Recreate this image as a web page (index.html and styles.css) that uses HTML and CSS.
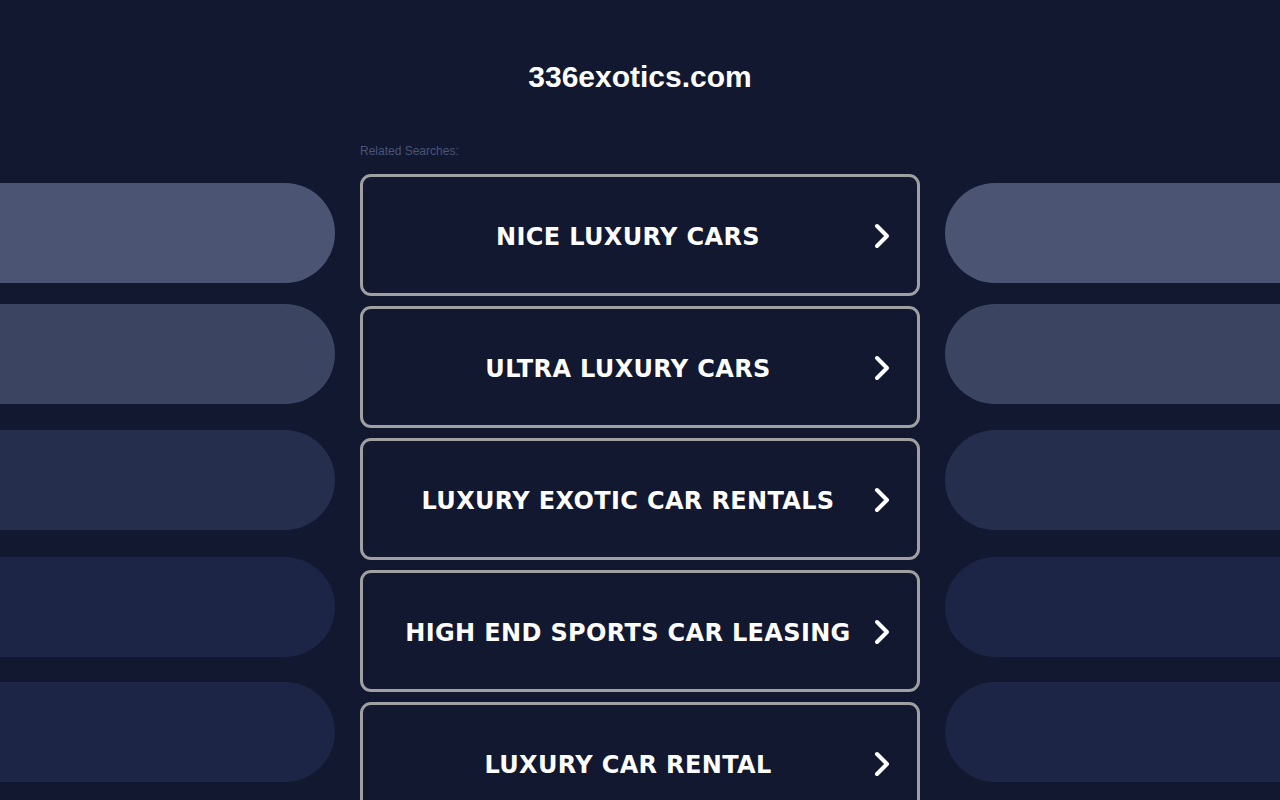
FILE: index.html
```html
<!DOCTYPE html>
<html>
<head>
<meta charset="utf-8">
<title>336exotics.com</title>
<link rel="stylesheet" href="styles.css">
</head>
<body>
<div class="page">
  <h1 class="title">336exotics.com</h1>
  <div class="grid">
    <div class="side side-left">
      <div class="pill p1"></div>
      <div class="pill p2"></div>
      <div class="pill p3"></div>
      <div class="pill p4"></div>
      <div class="pill p5"></div>
    </div>
    <div class="center">
      <div class="label">Related Searches:</div>
      <a class="btn" href="#"><span class="btn-text">NICE LUXURY CARS</span><svg class="chev" viewBox="0 0 18 28" width="18" height="28"><path d="M4 4 L14 14 L4 24" fill="none" stroke="#fff" stroke-width="4" stroke-linecap="round" stroke-linejoin="round"/></svg></a>
      <a class="btn" href="#"><span class="btn-text">ULTRA LUXURY CARS</span><svg class="chev" viewBox="0 0 18 28" width="18" height="28"><path d="M4 4 L14 14 L4 24" fill="none" stroke="#fff" stroke-width="4" stroke-linecap="round" stroke-linejoin="round"/></svg></a>
      <a class="btn" href="#"><span class="btn-text">LUXURY EXOTIC CAR RENTALS</span><svg class="chev" viewBox="0 0 18 28" width="18" height="28"><path d="M4 4 L14 14 L4 24" fill="none" stroke="#fff" stroke-width="4" stroke-linecap="round" stroke-linejoin="round"/></svg></a>
      <a class="btn" href="#"><span class="btn-text">HIGH END SPORTS CAR LEASING</span><svg class="chev" viewBox="0 0 18 28" width="18" height="28"><path d="M4 4 L14 14 L4 24" fill="none" stroke="#fff" stroke-width="4" stroke-linecap="round" stroke-linejoin="round"/></svg></a>
      <a class="btn" href="#"><span class="btn-text">LUXURY CAR RENTAL</span><svg class="chev" viewBox="0 0 18 28" width="18" height="28"><path d="M4 4 L14 14 L4 24" fill="none" stroke="#fff" stroke-width="4" stroke-linecap="round" stroke-linejoin="round"/></svg></a>
    </div>
    <div class="side side-right">
      <div class="pill p1"></div>
      <div class="pill p2"></div>
      <div class="pill p3"></div>
      <div class="pill p4"></div>
      <div class="pill p5"></div>
    </div>
  </div>
</div>
</body>
</html>
```
FILE: styles.css
```css
html, body {
  margin: 0;
  padding: 0;
  background: #111830;
  height: 100%;
  overflow: hidden;
}
.page {
  width: 1280px;
  font-family: "Liberation Sans", Arial, sans-serif;
}
.title {
  margin: 0;
  padding-top: 58px;
  height: 82px;
  box-sizing: border-box;
  text-align: center;
  color: #ffffff;
  font-size: 30px;
  font-weight: bold;
  line-height: 38px;
}
.grid {
  display: grid;
  grid-template-columns: 335px 560px 335px;
  column-gap: 25px;
  padding-top: 59px;
}
.side {
  display: flex;
  flex-direction: column;
  padding-top: 42px;
}
.pill {
  height: 100px;
  flex: none;
}
.side-left .pill { border-radius: 0 50px 50px 0; }
.side-right .pill { border-radius: 50px 0 0 50px; }
.p1 { background: #4b5573; }
.p2 { background: #3b4461; margin-top: 21px; }
.p3 { background: #262e4d; margin-top: 26px; }
.p4 { background: #1c2545; margin-top: 27px; }
.p5 { background: #1c2545; margin-top: 25px; }
.center {
  display: flex;
  flex-direction: column;
}
.label {
  font-size: 12px;
  color: #4a5578;
  line-height: 14px;
  height: 14px;
  padding-top: 3px;
  margin-bottom: 16px;
}
.btn {
  display: flex;
  align-items: center;
  height: 122px;
  box-sizing: border-box;
  border: 3px solid #a0a0a2;
  border-radius: 11px;
  margin-bottom: 10px;
  padding-left: 20px;
  text-decoration: none;
  flex: none;
}
.btn-text {
  flex: 1;
  text-align: center;
  color: #ffffff;
  font-family: "DejaVu Sans", Verdana, sans-serif;
  font-weight: bold;
  font-size: 24px;
  letter-spacing: 0.35px;
  padding-top: 4px;
}
.chev {
  flex: none;
  margin-right: 26px;
  margin-left: 0;
  margin-top: 2px;
}
```
